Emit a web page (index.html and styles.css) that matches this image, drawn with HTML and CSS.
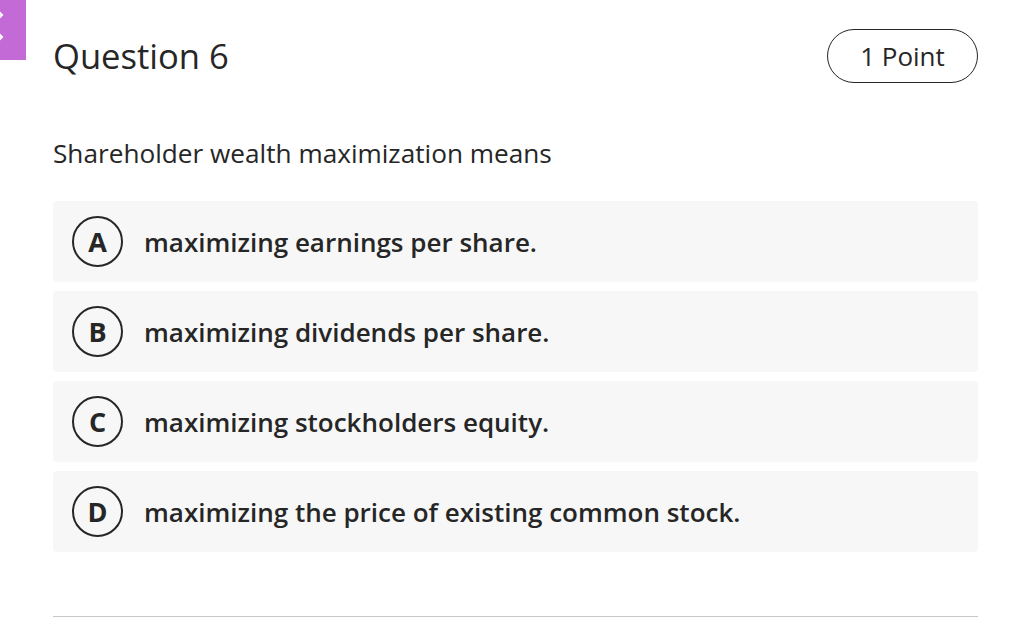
FILE: index.html
```html
<!DOCTYPE html>
<html>
<head>
<meta charset="utf-8" />
<title>Question 6</title>
<link rel="stylesheet" href="styles.css">
</head>
<body>
	<div class="side-tab">
		<svg width="26" height="60" viewBox="0 0 26 60">
			<path d="M-3 10 L2 15 L-3 20" fill="none" stroke="#fff" stroke-width="2"/>
			<path d="M-3 32 L2 37 L-3 42" fill="none" stroke="#fff" stroke-width="2"/>
		</svg>
	</div>

	<div class="quiz">
		<div class="quiz-head">
			<h1 class="quiz-title">Question 6</h1>
			<span class="points">1 Point</span>
		</div>

		<p class="prompt">Shareholder wealth maximization means</p>

		<ul class="options">
			<li><span class="letter">A</span><span class="answer">maximizing earnings per share.</span></li>
			<li><span class="letter">B</span><span class="answer">maximizing dividends per share.</span></li>
			<li><span class="letter">C</span><span class="answer">maximizing stockholders equity.</span></li>
			<li><span class="letter">D</span><span class="answer">maximizing the price of existing common stock.</span></li>
		</ul>

		<div class="divider"></div>
	</div>
</body>
</html>
```

FILE: styles.css
```css
*{
	padding: 0;
	margin: 0;
	box-sizing: border-box;
}
body{
	font-family: "Open Sans", "Liberation Sans", sans-serif;
	color: #262626;
	background: #fff;
}
.side-tab{
	position: absolute;
	left: 0; top: 0;
	width: 26px;
	height: 60px;
	background: #c46ad6;
}
.side-tab svg{
	display: block;
}
.quiz{
	width: 978px;
	padding: 29px 0 0 53px;
}
.quiz-head{
	display: flex;
	justify-content: space-between;
	align-items: center;
	height: 54px;
}
.quiz-title{
	font-size: 34.6px;
	font-weight: 500;
	line-height: 40px;
}
.points{
	display: flex;
	align-items: center;
	justify-content: center;
	width: 151px;
	height: 54px;
	border: 1px solid #262626;
	border-radius: 27px;
	font-size: 26px;
	font-weight: 500;
}
.prompt{
	margin-top: 53px;
	font-size: 26.2px;
	line-height: 34px;
}
.options{
	list-style: none;
	margin-top: 31px;
	display: flex;
	flex-direction: column;
	gap: 9px;
}
.options li{
	display: flex;
	align-items: center;
	height: 81px;
	padding-left: 19px;
	background: #f7f7f7;
	border-radius: 4px;
}
.letter{
	display: flex;
	align-items: center;
	justify-content: center;
	width: 51px;
	height: 51px;
	border: 2.6px solid #262626;
	border-radius: 50%;
	font-size: 27px;
	font-weight: 700;
	flex-shrink: 0;
}
.answer{
	margin-left: 21px;
	font-size: 26px;
	font-weight: 600;
}
.divider{
	margin-top: 64px;
	height: 1px;
	background: #c8c8c8;
}
```
